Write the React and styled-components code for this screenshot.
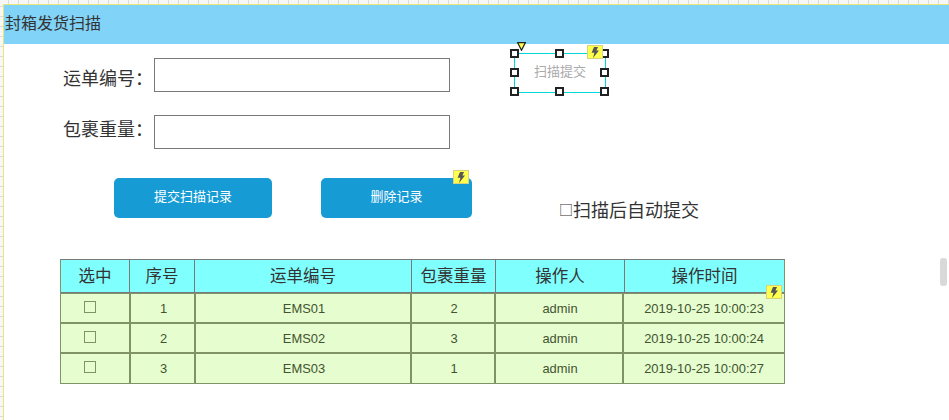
import styled, { createGlobalStyle } from "styled-components";

const rows = [
  { id: 1, code: "EMS01", weight: 2, user: "admin", time: "2019-10-25 10:00:23" },
  { id: 2, code: "EMS02", weight: 3, user: "admin", time: "2019-10-25 10:00:24" },
  { id: 3, code: "EMS03", weight: 1, user: "admin", time: "2019-10-25 10:00:27" },
];
const headers = ["选中", "序号", "运单编号", "包裹重量", "操作人", "操作时间"];
const handles = [
  [0, 0], [50, 0], [100, 0],
  [0, 50], [100, 50],
  [0, 100], [50, 100], [100, 100],
];

const GlobalStyle = createGlobalStyle`
  html, body {
    margin: 0;
    padding: 0;
    background: #fff;
    overflow: hidden;
  }
  * {
    box-sizing: border-box;
  }
`;

const Page = styled.div`
  position: relative;
  width: 949px;
  height: 420px;
  padding: 4px 0 0 3px;
  overflow: hidden;
  font-family: "Liberation Sans", "Noto Sans CJK SC", sans-serif;
  color: #333;
  background-color: #f7f7f7;
  background-image:
    linear-gradient(to right, #dcdcdc 1px, transparent 1px),
    linear-gradient(to bottom, #dcdcdc 1px, transparent 1px);
  background-size: 10px 10px;
  background-position: 8px 6px;
`;

const Canvas = styled.div`
  height: 100%;
  background: #fff;
  border-top: 1px solid #e6e67a;
  border-left: 1px solid #e6e67a;
`;

const TitleBar = styled.div`
  display: flex;
  align-items: center;
  height: 39px;
  padding: 0 0 5px 1px;
  background: #81d3f8;
  font-size: 16px;
`;

const TopSection = styled.div`
  display: flex;
  align-items: flex-start;
  padding: 14px 0 0 59px;
`;

const Fields = styled.div`
  display: flex;
  flex-direction: column;
  gap: 23px;
`;

const FieldRow = styled.label`
  display: flex;
  align-items: center;
  font-size: 18px;
`;

const FieldLabel = styled.span`
  width: 91px;
  padding: ${(p) => p.$pad};
  color: #333;
`;

const FieldInput = styled.div`
  width: 296px;
  height: 34px;
  background: #fff;
  border: 1px solid #797979;
`;

const SelectedWidget = styled.div`
  position: relative;
  display: flex;
  align-items: center;
  justify-content: center;
  width: 92px;
  height: 40px;
  margin: -5px 0 0 64px;
  padding-bottom: 6px;
  border: 1px solid #00d8d8;
  color: #aaa;
  font-size: 13px;
`;

const Handle = styled.span`
  position: absolute;
  width: 7px;
  height: 7px;
  margin: -4px 0 0 -4px;
  background: #fff;
  border: 1px solid #222;
  outline: 0.5px solid #222;
`;

const Marker = styled.svg`
  position: absolute;
  left: 2px;
  top: -12px;
  width: 9px;
  height: 9px;
`;

const Badge = styled.span`
  position: absolute;
  z-index: 2;
  top: ${(p) => p.$top}px;
  right: ${(p) => p.$right}px;
  display: flex;
  align-items: center;
  justify-content: center;
  width: 16px;
  height: 14px;
  padding: 0;
  background: #ffff4d;
  border: 1px solid #d8d27c;
`;

const ButtonRow = styled.div`
  display: flex;
  align-items: flex-start;
  padding: 29px 0 0 110px;
`;

const ActionButton = styled.button`
  position: relative;
  width: ${(p) => p.$width}px;
  height: 40px;
  margin-right: ${(p) => p.$gap}px;
  padding: 0 0 6px;
  background: #169bd5;
  border: 0;
  border-radius: 5px;
  color: #fff;
  font-family: inherit;
  font-size: 13px;
`;

const AutoSubmit = styled.div`
  display: flex;
  align-items: center;
  height: 16px;
  margin: 23px 0 0 -1px;
  font-size: 18px;
  color: #333;
`;

const BoxGlyph = styled.span`
  width: 14px;
  font-family: "Noto Sans CJK SC", sans-serif;
  font-size: 14px;
  font-weight: 400;
`;

const Table = styled.div`
  width: 725px;
  margin: 41px 0 0 56px;
  border: 1px solid #797979;
  border-color: #797979 #7f9268 #7f9268;
  background: #e5fdcf;
`;

const HeadRow = styled.div`
  position: relative;
  display: grid;
  grid-template-columns: 69px 65px 217px 84px 129px 1fr;
  height: 33px;
  padding-bottom: 2px;
  background: #80ffff;
  border-bottom: 1px solid #797979;
`;

const HeadCell = styled.div`
  display: flex;
  align-items: center;
  justify-content: center;
  margin-bottom: -2px;
  padding-bottom: 2px;
  font-size: 16.5px;
  color: #333;
  border-right: 1px solid #797979;
  &:last-of-type {
    border-right: 0;
  }
`;

const BodyRow = styled.div`
  display: grid;
  grid-template-columns: 70px 65px 216px 84px 128px 1fr;
  height: ${(p) => (p.$first ? 31 : p.$last ? 29 : 30)}px;
  border-top: ${(p) => (p.$first ? "1px" : "0")} solid #7f9268;
  border-bottom: ${(p) => (p.$last ? "0" : "2px")} solid #7f9268;
`;

const BodyCell = styled.div`
  display: flex;
  align-items: center;
  justify-content: center;
  padding-left: 2px;
  font-size: 12.9px;
  color: #435330;
  border-right: 2px solid #7f9268;
  &:last-child {
    padding-left: 0;
    border-right: 0;
  }
`;

const CheckBox = styled.span`
  width: 12px;
  height: 12px;
  margin: 0 12px 3px 0;
  border: 1px solid #7f9268;
`;

const ScrollThumb = styled.div`
  position: absolute;
  left: 940px;
  top: 258px;
  width: 7px;
  height: 28px;
  border-radius: 3px;
  background: #d9d9d9;
`;

function Bolt() {
  return (
    <svg width="8" height="11" viewBox="0 0 8 11">
      <path d="M3 0h4L5.4 3.6H8L2 11l1.4-5.2H.6z" fill="#555" />
    </svg>
  );
}

export default function App() {
  return (
    <Page>
      <GlobalStyle />
      <Canvas>
        <TitleBar>封箱发货扫描</TitleBar>
        <TopSection>
          <Fields>
            <FieldRow>
              <FieldLabel $pad="3px 0 0">运单编号：</FieldLabel>
              <FieldInput />
            </FieldRow>
            <FieldRow>
              <FieldLabel $pad="0 0 8px">包裹重量：</FieldLabel>
              <FieldInput />
            </FieldRow>
          </Fields>
          <SelectedWidget>
            扫描提交
            {handles.map(([x, y]) => (
              <Handle key={`${x}-${y}`} style={{ left: `${x}%`, top: `${y}%` }} />
            ))}
            <Marker viewBox="0 0 9 9">
              <path d="M.7.7h7.6L4.5 8.3z" fill="#ffff4d" stroke="#222" strokeWidth="1.2" />
            </Marker>
            <Badge $top={-9} $right={2}>
              <Bolt />
            </Badge>
          </SelectedWidget>
        </TopSection>
        <ButtonRow>
          <ActionButton $width={158} $gap={49}>提交扫描记录</ActionButton>
          <ActionButton $width={151} $gap={88}>
            删除记录
            <Badge $top={-8} $right={3}>
              <Bolt />
            </Badge>
          </ActionButton>
          <AutoSubmit>
            <BoxGlyph>□</BoxGlyph>扫描后自动提交
          </AutoSubmit>
        </ButtonRow>
        <Table>
          <HeadRow>
            {headers.map((h) => (
              <HeadCell key={h}>{h}</HeadCell>
            ))}
            <Badge $top={25} $right={2}>
              <Bolt />
            </Badge>
          </HeadRow>
          {rows.map((r, i) => (
            <BodyRow key={r.id} $first={i === 0} $last={i === rows.length - 1}>
              <BodyCell>
                <CheckBox />
              </BodyCell>
              <BodyCell>{r.id}</BodyCell>
              <BodyCell>{r.code}</BodyCell>
              <BodyCell>{r.weight}</BodyCell>
              <BodyCell>{r.user}</BodyCell>
              <BodyCell>{r.time}</BodyCell>
            </BodyRow>
          ))}
        </Table>
      </Canvas>
      <ScrollThumb />
    </Page>
  );
}
